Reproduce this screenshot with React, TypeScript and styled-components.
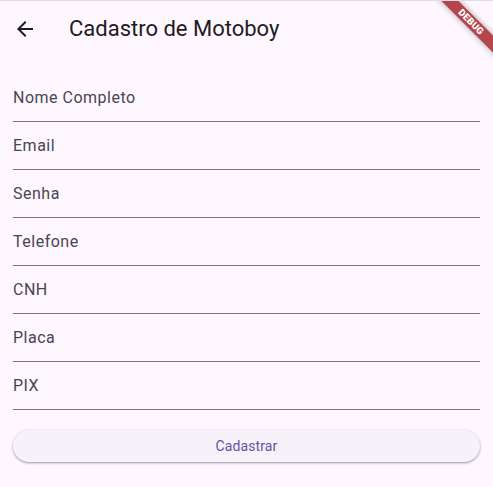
import React from "react";
import styled, { createGlobalStyle } from "styled-components";

const Global = createGlobalStyle`
  html, body { margin: 0; padding: 0; background: #fef7ff; }
  body { font-family: Roboto, "Noto Sans", sans-serif; }
  * { box-sizing: border-box; }
`;

const Screen = styled.div`
  position: relative;
  width: 493px;
  height: 487px;
  overflow: hidden;
  background: #fef7ff;
  border-top: 1px solid #e2dee4;
  display: flex;
  flex-direction: column;
`;

const AppBar = styled.header`
  height: 56px;
  display: flex;
  align-items: center;
  flex-shrink: 0;
`;

const BackButton = styled.button`
  width: 48px;
  height: 48px;
  margin-left: 1px;
  border: none;
  background: transparent;
  padding: 0;
  display: flex;
  align-items: center;
  justify-content: center;
  color: #1d1b20;
`;

const Title = styled.h1`
  margin: 0 0 0 20px;
  font-size: 22px;
  font-weight: 400;
  color: #1d1b20;
  line-height: 28px;
`;

const Form = styled.form`
  display: flex;
  flex-direction: column;
  padding: 17px 13px 0 13px;
`;

const Field = styled.label`
  height: 48px;
  display: flex;
  align-items: center;
  border-bottom: 1px solid #79747e;
  font-size: 16px;
  letter-spacing: 0.5px;
  color: #49454f;
`;

const SubmitButton = styled.button`
  margin-top: 20px;
  height: 32px;
  border: none;
  border-radius: 16px;
  background: #f7f2fa;
  box-shadow: 0 1px 2px rgba(0, 0, 0, 0.3), 0 1px 3px 1px rgba(0, 0, 0, 0.08);
  color: #6750a4;
  font-family: Roboto, sans-serif;
  font-size: 14px;
  font-weight: 400;
  letter-spacing: 0.1px;
`;

const Banner = styled.div`
  position: absolute;
  width: 120px;
  height: 12px;
  left: ${471.25 - 60}px;
  top: ${21.75 - 6 - 1}px;
  transform: rotate(45deg);
  background: #b4464b;
  box-shadow: 0 0 6px rgba(0, 0, 0, 0.35);
  color: #fff;
  font-size: 9.5px;
  font-weight: 900;
  line-height: 12px;
  text-align: center;
  letter-spacing: 0.2px;
`;

const fields = ["Nome Completo", "Email", "Senha", "Telefone", "CNH", "Placa", "PIX"];

export default function App() {
  return (
    <Screen>
      <Global />
      <AppBar>
        <BackButton type="button" aria-label="Voltar">
          <svg width="24" height="24" viewBox="0 0 24 24">
            <path d="M20 11H7.83l5.59-5.59L12 4l-8 8 8 8 1.41-1.41L7.83 13H20v-2z" fill="currentColor" />
          </svg>
        </BackButton>
        <Title>Cadastro de Motoboy</Title>
      </AppBar>
      <Form onSubmit={(e) => e.preventDefault()}>
        {fields.map((f) => (
          <Field key={f}>{f}</Field>
        ))}
        <SubmitButton type="submit">Cadastrar</SubmitButton>
      </Form>
      <Banner>DEBUG</Banner>
    </Screen>
  );
}
